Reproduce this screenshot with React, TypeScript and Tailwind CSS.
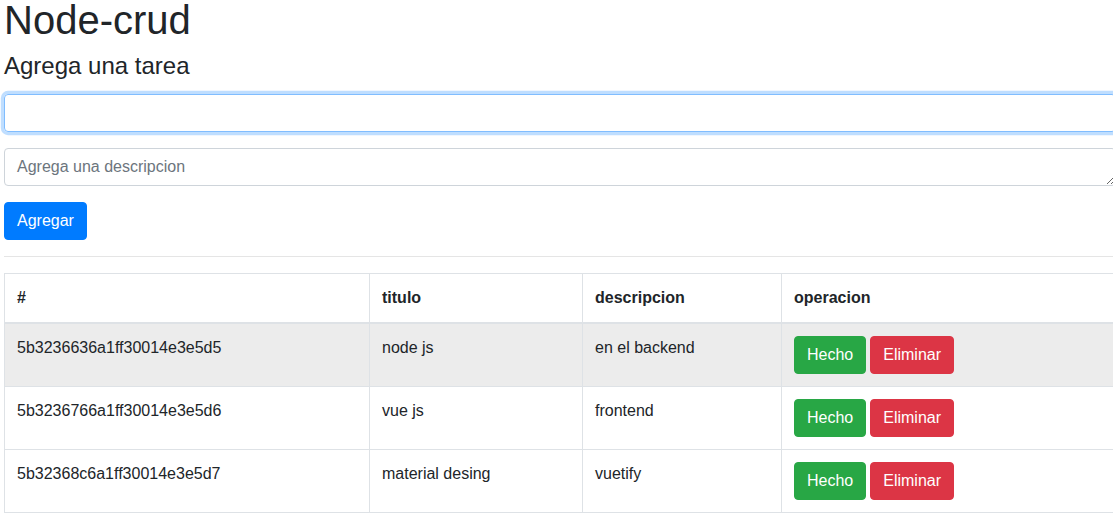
type Task = { id: string; titulo: string; descripcion: string };

const tasks: Task[] = [
  { id: "5b3236636a1ff30014e3e5d5", titulo: "node js", descripcion: "en el backend" },
  { id: "5b3236766a1ff30014e3e5d6", titulo: "vue js", descripcion: "frontend" },
  { id: "5b32368c6a1ff30014e3e5d7", titulo: "material desing", descripcion: "vuetify" },
];

const App = () => {
  return (
    <div className="w-[1113px] h-[515px] overflow-hidden bg-white font-['Liberation_Sans',Arial,sans-serif] text-[#212529]">
      <div className="w-[1112px] ml-[4px]">
        <h1 className="mb-[12px] text-[40px] leading-[40px] font-normal">Node-crud</h1>
        <h4 className="mb-[13px] text-[24px] leading-[28.8px] font-normal">Agrega una tarea</h4>

        <form className="flex flex-col" onSubmit={(e) => e.preventDefault()}>
          <input
            type="text"
            className="mb-4 h-[38px] w-full rounded-[4px] border border-[#80bdff] px-3 text-base outline-none shadow-[0_0_0_3.2px_rgba(0,123,255,0.25)]"
          />
          <textarea
            rows={1}
            placeholder="Agrega una descripcion"
            className="mb-4 block h-[38px] w-full rounded-[4px] border border-[#ced4da] px-3 py-[6px] text-base leading-6 outline-none placeholder:text-[#6c757d]"
          />
          <div>
            <button
              type="submit"
              className="h-[38px] rounded-[4px] border border-[#007bff] bg-[#007bff] px-3 text-base leading-6 text-white"
            >
              Agregar
            </button>
          </div>
        </form>

        <hr className="my-4 border-t border-[rgba(0,0,0,0.1)]" />

        <table className="w-full border-collapse text-base leading-6">
          <thead>
            <tr>
              <th className="w-[365px] border border-b-2 border-[#dee2e6] p-3 text-left align-bottom font-bold">#</th>
              <th className="w-[213px] border border-b-2 border-[#dee2e6] p-3 text-left align-bottom font-bold">titulo</th>
              <th className="w-[199px] border border-b-2 border-[#dee2e6] p-3 text-left align-bottom font-bold">descripcion</th>
              <th className="border border-b-2 border-[#dee2e6] p-3 text-left align-bottom font-bold">operacion</th>
            </tr>
          </thead>
          <tbody>
            {tasks.map((task, i) => (
              <tr key={task.id} className={i === 0 ? "bg-[#ececec]" : ""}>
                <td className="border border-[#dee2e6] p-3 align-top">{task.id}</td>
                <td className="border border-[#dee2e6] p-3 align-top">{task.titulo}</td>
                <td className="border border-[#dee2e6] p-3 align-top">{task.descripcion}</td>
                <td className="border border-[#dee2e6] p-3 align-top">
                  <div className="flex gap-1">
                    <button className="h-[38px] rounded-[4px] border border-[#28a745] bg-[#28a745] px-3 text-white">Hecho</button>
                    <button className="h-[38px] rounded-[4px] border border-[#dc3545] bg-[#dc3545] px-3 text-white">Eliminar</button>
                  </div>
                </td>
              </tr>
            ))}
          </tbody>
        </table>
      </div>
    </div>
  );
};

export default App;
